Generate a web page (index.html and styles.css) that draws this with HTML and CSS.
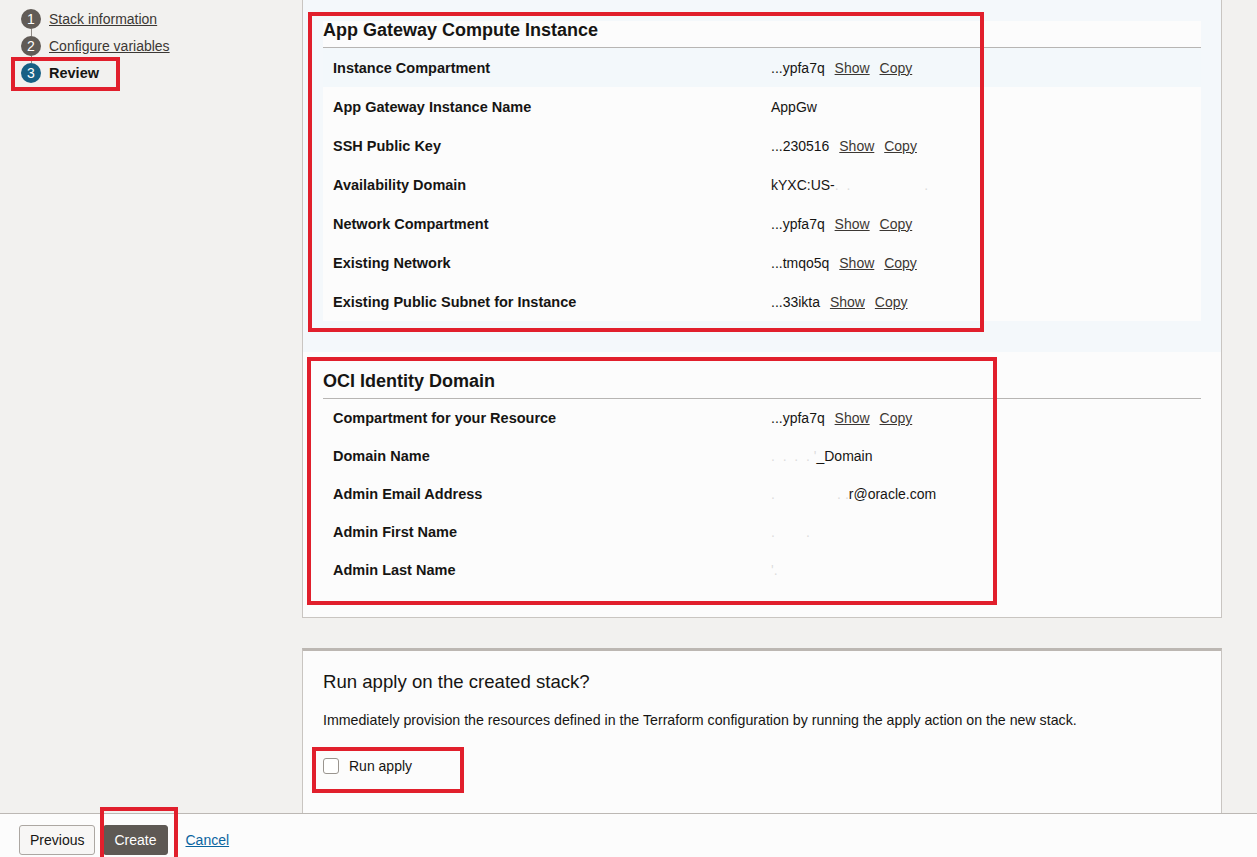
FILE: index.html
```html
<!DOCTYPE html>
<html lang="en">
<head>
<meta charset="utf-8">
<title>Create stack - Review</title>
<link rel="stylesheet" href="styles.css">
</head>
<body>
<div class="app">
  <div class="page">
    <nav class="steps">
      <div class="step"><span class="num">1</span><a class="step-link" href="#">Stack information</a></div>
      <div class="connector"></div>
      <div class="step"><span class="num">2</span><a class="step-link" href="#">Configure variables</a></div>
      <div class="connector"></div>
      <div class="step active"><span class="num">3</span><span class="step-cur">Review</span></div>
    </nav>

    <main class="main">
      <section class="panel">
        <div class="group group-blue">
          <div class="box">
            <h2 class="group-title">App Gateway Compute Instance</h2>
            <div class="rows rows-39">
              <div class="row hl"><div class="lbl">Instance Compartment</div><div class="val">...ypfa7q <a href="#">Show</a> <a href="#">Copy</a></div></div>
              <div class="row"><div class="lbl">App Gateway Instance Name</div><div class="val">AppGw</div></div>
              <div class="row"><div class="lbl">SSH Public Key</div><div class="val">...230516 <a href="#">Show</a> <a href="#">Copy</a></div></div>
              <div class="row"><div class="lbl">Availability Domain</div><div class="val">kYXC:US-<span class="blur">.&nbsp;&nbsp;.&nbsp;&nbsp;&nbsp;&nbsp;&nbsp;&nbsp;&nbsp;&nbsp;&nbsp;&nbsp;&nbsp;&nbsp;&nbsp;&nbsp;&nbsp;&nbsp;&nbsp;&nbsp;&nbsp;.</span></div></div>
              <div class="row"><div class="lbl">Network Compartment</div><div class="val">...ypfa7q <a href="#">Show</a> <a href="#">Copy</a></div></div>
              <div class="row"><div class="lbl">Existing Network</div><div class="val">...tmqo5q <a href="#">Show</a> <a href="#">Copy</a></div></div>
              <div class="row"><div class="lbl">Existing Public Subnet for Instance</div><div class="val">...33ikta <a href="#">Show</a> <a href="#">Copy</a></div></div>
            </div>
          </div>
        </div>
        <div class="group group-white">
          <h2 class="group-title">OCI Identity Domain</h2>
          <div class="rows rows-38">
            <div class="row"><div class="lbl">Compartment for your Resource</div><div class="val">...ypfa7q <a href="#">Show</a> <a href="#">Copy</a></div></div>
            <div class="row"><div class="lbl">Domain Name</div><div class="val"><span class="blur">.&nbsp;&nbsp;.&nbsp;&nbsp;.&nbsp;&nbsp;.&nbsp;'</span>_Domain</div></div>
            <div class="row"><div class="lbl">Admin Email Address</div><div class="val"><span class="blur">.&nbsp;&nbsp;&nbsp;&nbsp;&nbsp;&nbsp;&nbsp;&nbsp;&nbsp;&nbsp;&nbsp;&nbsp;&nbsp;&nbsp;&nbsp;&nbsp;.&nbsp;.</span>r@oracle.com</div></div>
            <div class="row"><div class="lbl">Admin First Name</div><div class="val"><span class="blur">.&nbsp;&nbsp;&nbsp;&nbsp;&nbsp;&nbsp;&nbsp;&nbsp;.</span></div></div>
            <div class="row"><div class="lbl">Admin Last Name</div><div class="val"><span class="blur">'.</span></div></div>
          </div>
        </div>
      </section>

      <section class="panel panel-apply">
        <h3 class="apply-title">Run apply on the created stack?</h3>
        <p class="apply-desc">Immediately provision the resources defined in the Terraform configuration by running the apply action on the new stack.</p>
        <label class="check"><span class="checkbox"></span><span>Run apply</span></label>
      </section>
    </main>
  </div>

  <footer class="footer">
    <button class="btn btn-secondary" type="button">Previous</button>
    <button class="btn btn-primary" type="button">Create</button>
    <a class="cancel" href="#">Cancel</a>
  </footer>
</div>

<div class="mark mark-review"></div>
<div class="mark mark-compute"></div>
<div class="mark mark-identity"></div>
<div class="mark mark-apply"></div>
<div class="mark mark-create"></div>
</body>
</html>
```

FILE: styles.css
```css
* { box-sizing: border-box; }

html, body {
  margin: 0;
  padding: 0;
}

body {
  font-family: "Liberation Sans", Arial, sans-serif;
  color: #161513;
  background: #f2f1ef;
  width: 1257px;
  height: 857px;
  overflow: hidden;
  position: relative;
}

.app {
  display: flex;
  flex-direction: column;
  height: 857px;
}

.page {
  flex: 1;
  display: flex;
  overflow: hidden;
  min-height: 0;
}

/* ---------- left step navigation ---------- */
.steps {
  width: 302px;
  flex: none;
  padding: 9px 0 0 21px;
  display: flex;
  flex-direction: column;
}

.step {
  display: flex;
  align-items: center;
  height: 20px;
  gap: 8px;
}

.num {
  width: 20px;
  height: 20px;
  border-radius: 50%;
  background: #615b56;
  color: #fff;
  font-size: 14px;
  display: flex;
  align-items: center;
  justify-content: center;
  line-height: 1;
}

.step.active .num { background: #176084; }

.step-link {
  font-size: 14px;
  color: #3c3834;
  text-decoration: underline;
}

.step-cur {
  font-size: 14.5px;
  font-weight: bold;
  color: #161513;
}

.connector {
  width: 1px;
  height: 7px;
  margin-left: 10px;
  background: #8d8782;
}

/* ---------- main column ---------- */
.main {
  width: 920px;
  flex: none;
  display: flex;
  flex-direction: column;
  gap: 30px;
}

.panel {
  background: #fcfcfc;
  border: 1px solid #c9c5c1;
  border-top: none;
}

.group-blue {
  background: #f4f8fb;
  padding: 21px 20px 31px 20px;
}

.box {
  background: #fcfcfc;
}

.group-title {
  margin: 0;
  font-size: 18px;
  font-weight: bold;
  line-height: 18px;
  padding-bottom: 8px;
  border-bottom: 1px solid #b7b5b3;
  color: #161513;
}

.rows { display: flex; flex-direction: column; }
.rows-39 .row { height: 39px; }
.rows-38 .row { height: 38px; }

.row {
  display: grid;
  grid-template-columns: 438px 1fr;
  align-items: center;
  padding-left: 10px;
}

.row.hl { background: #f3f8fb; }

.lbl {
  font-size: 14.5px;
  font-weight: bold;
  color: #161513;
}

.val {
  font-size: 14px;
  color: #161513;
  white-space: nowrap;
}

.val a {
  color: #3c3834;
  text-decoration: underline;
  margin-left: 6px;
}

.blur {
  color: #dcdcdc;
}

.group-white {
  padding: 20px 20px 28px 20px;
}

.panel-apply {
  border-top: 3px solid #bcb7b2;
  padding: 20px 20px 30px 20px;
  flex: 1;
  border-bottom: none;
}

.apply-title {
  margin: 0;
  font-size: 18.6px;
  font-weight: normal;
  line-height: 22px;
  color: #161513;
}

.apply-desc {
  margin: 18px 0 0;
  font-size: 14.2px;
  line-height: 18px;
  color: #161513;
}

.check {
  margin-top: 27px;
  display: flex;
  align-items: center;
  gap: 10px;
  height: 20px;
  font-size: 14px;
  color: #161513;
}

.checkbox {
  width: 16px;
  height: 16px;
  border: 1px solid #9a958f;
  border-radius: 3px;
  background: #fff;
}

/* ---------- footer ---------- */
.footer {
  height: 44px;
  flex: none;
  border-top: 1px solid #bcb8b4;
  background: #fcfcfc;
  display: flex;
  align-items: flex-start;
  padding: 11px 0 0 19px;
  gap: 8px;
}

.btn {
  height: 30px;
  font-family: "Liberation Sans", Arial, sans-serif;
  font-size: 14px;
  border-radius: 3px;
  padding: 0 10px;
  cursor: pointer;
}

.btn-secondary {
  background: #f7f6f5;
  border: 1px solid #aca7a2;
  color: #161513;
}

.btn-primary {
  background: #5e5954;
  border: 1px solid #5e5954;
  color: #fff;
}

.cancel {
  margin-left: 10px;
  font-size: 14px;
  line-height: 30px;
  color: #0a64a0;
  text-decoration: underline;
}

/* ---------- red annotation boxes (overlay) ---------- */
.mark {
  position: absolute;
  border: 4px solid #e11f2c;
  pointer-events: none;
}

.mark-review   { left: 11px;  top: 57px;  width: 109px; height: 34px; }
.mark-compute  { left: 308px; top: 12px;  width: 676px; height: 320px; }
.mark-identity { left: 307px; top: 357px; width: 690px; height: 248px; }
.mark-apply    { left: 312px; top: 747px; width: 152px; height: 46px; }
.mark-create   { left: 100px; top: 807px; width: 78px;  height: 56px; }
```
